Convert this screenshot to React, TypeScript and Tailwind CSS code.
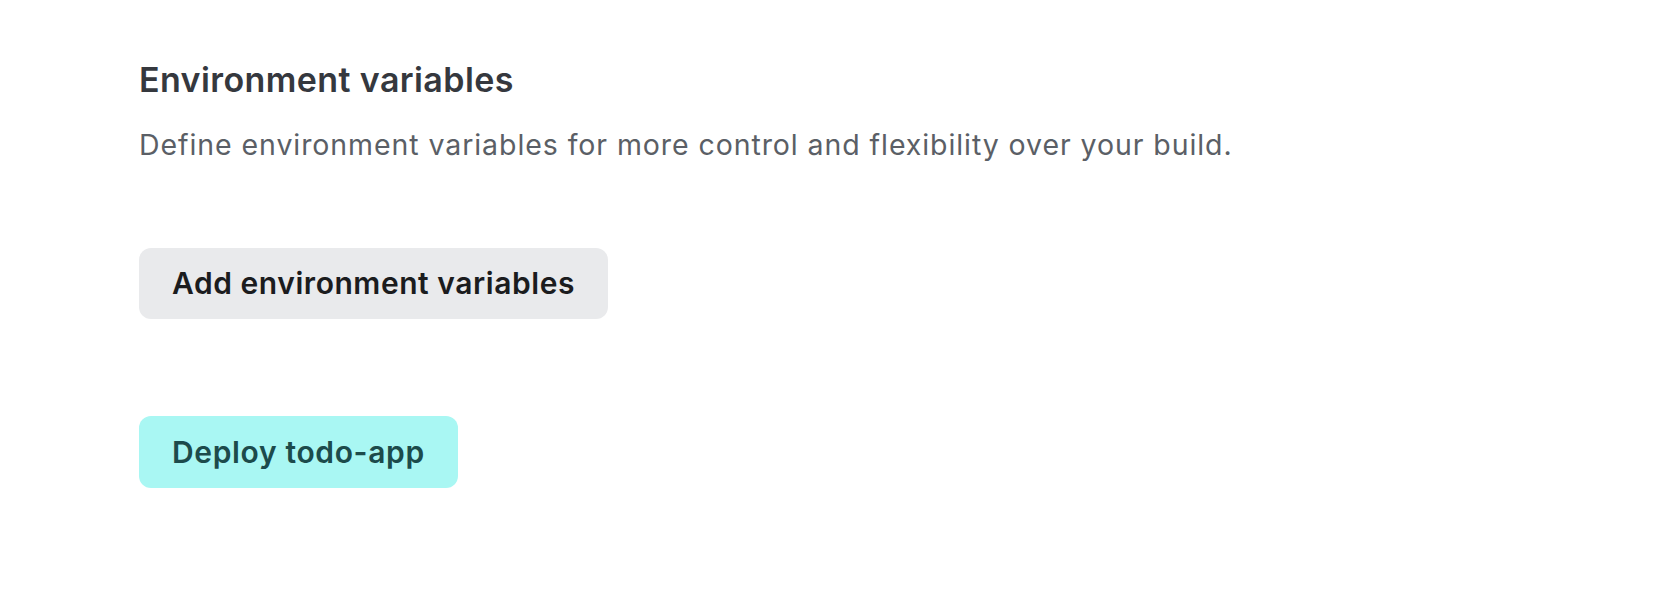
import React from "react";

export default function App() {
  return (
    <div
      className="min-h-screen w-full bg-white pl-[139px] pt-[58px]"
      style={{ fontFamily: "Inter, 'Noto Sans', sans-serif" }}
    >
      <h2 className="text-[34px] font-semibold leading-[44px] tracking-[0.4px] text-[#35383e]">
        Environment variables
      </h2>
      <p className="mt-[23px] text-[28.5px] leading-[40px] tracking-[0.92px] text-[#5b5f66]">
        Define environment variables for more control and flexibility over your build.
      </p>
      <div className="mt-[83px] flex">
        <button className="h-[71px] rounded-[12px] bg-[#e9eaec] px-[33px] text-[30px] font-semibold tracking-[0.55px] text-[#1b1c1e]">
          Add environment variables
        </button>
      </div>
      <div className="mt-[97px] flex">
        <button className="h-[72px] rounded-[12px] bg-[#a9f7f3] px-[33px] text-[30px] font-semibold tracking-[0.65px] text-[#1c4b4b]">
          Deploy todo-app
        </button>
      </div>
    </div>
  );
}
